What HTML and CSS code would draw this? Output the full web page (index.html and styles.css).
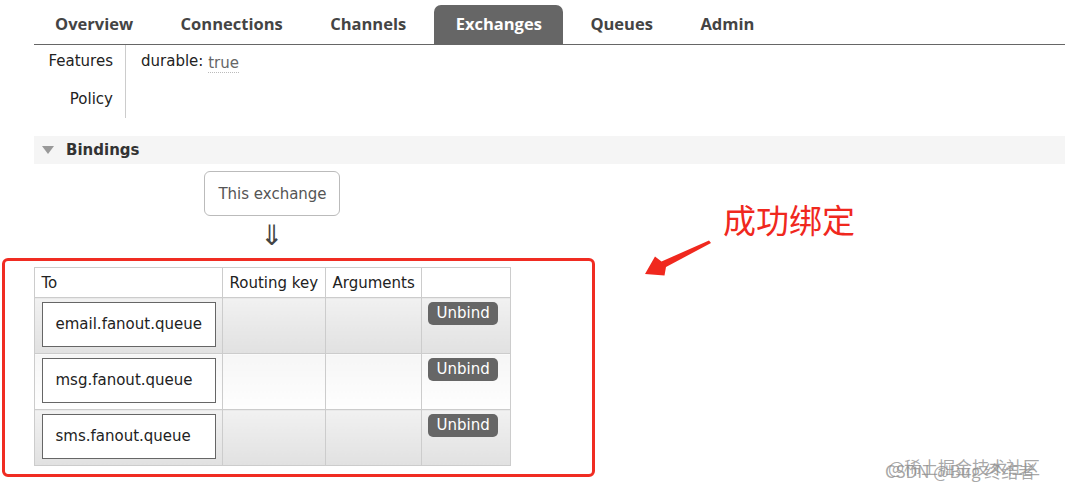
FILE: index.html
```
<!DOCTYPE html>
<html lang="en">
<head>
<meta charset="utf-8">
<title>Exchange bindings</title>
<link rel="stylesheet" href="styles.css">
</head>
<body>
<div class="page">
  <ul class="tabs">
    <li class="tab">Overview</li>
    <li class="tab">Connections</li>
    <li class="tab">Channels</li>
    <li class="tab active">Exchanges</li>
    <li class="tab">Queues</li>
    <li class="tab">Admin</li>
  </ul>

  <table class="facts">
    <tr class="r1"><th>Features</th><td>durable: <abbr class="val">true</abbr></td></tr>
    <tr class="r2"><th>Policy</th><td></td></tr>
  </table>

  <div class="section-head"><span class="tri"></span><span class="section-title">Bindings</span></div>

  <div class="bindings-body">
    <div class="this-exchange">This exchange</div>
    <div class="down-arrow">&#8659;</div>
    <table class="bindings">
      <colgroup>
        <col class="c1"><col class="c2"><col class="c3"><col class="c4">
      </colgroup>
      <thead>
        <tr><th>To</th><th>Routing key</th><th>Arguments</th><th></th></tr>
      </thead>
      <tbody>
        <tr class="alt1">
          <td class="to"><div class="qbox">email.fanout.queue</div></td>
          <td></td><td></td>
          <td class="act"><span class="btn">Unbind</span></td>
        </tr>
        <tr class="alt0">
          <td class="to"><div class="qbox">msg.fanout.queue</div></td>
          <td></td><td></td>
          <td class="act"><span class="btn">Unbind</span></td>
        </tr>
        <tr class="alt1">
          <td class="to"><div class="qbox">sms.fanout.queue</div></td>
          <td></td><td></td>
          <td class="act"><span class="btn">Unbind</span></td>
        </tr>
      </tbody>
    </table>
  </div>

  <div class="red-frame"></div>
  <div class="note">成功绑定</div>
  <svg class="note-arrow" width="80" height="50" viewBox="640 235 80 50">
    <polygon points="709,240.5 711,243 666,267 664.5,275.5 645,274 655,256.5 661.5,261.5" fill="#f0281e"/>
  </svg>
  <div class="wm wm1">@稀土掘金技术社区</div>
  <div class="wm wm2">CSDN @Bug 终结者</div>
</div>
</body>
</html>
```

FILE: styles.css
```
html, body {
  margin: 0;
  padding: 0;
  background: #fff;
}

.page {
  position: relative;
  width: 1065px;
  height: 495px;
  overflow: hidden;
  font-family: "DejaVu Sans", Verdana, sans-serif;
  font-size: 15px;
  color: #222;
}

.tabs {
  list-style: none;
  margin: 0 0 0 34px;
  padding: 5px 0 0 1px;
  display: flex;
  border-bottom: 1px solid #666;
}

.tab {
  font-family: "Open Sans", sans-serif;
  font-weight: 700;
  font-size: 16.5px;
  color: #444;
  height: 39px;
  line-height: 38px;
  padding: 0 20px;
  margin-right: 7.5px;
  border-radius: 7px 7px 0 0;
}

.tab.active {
  background: #666;
  color: #fff;
  padding: 0 21px 0 22px;
}

.facts {
  border-collapse: collapse;
  margin-left: 34px;
}

.facts th {
  width: 79px;
  padding: 7px 12px 0 0;
  text-align: right;
  font-weight: normal;
  border-right: 1px solid #ccc;
  vertical-align: top;
}

.facts td {
  padding: 7px 0 0 15px;
  vertical-align: top;
}

.facts .r1 th,
.facts .r1 td {
  height: 31px;
}

.facts .r2 th,
.facts .r2 td {
  height: 28px;
}

.val {
  color: #666;
  text-decoration: none;
  border-bottom: 1px dotted #bbb;
  position: relative;
  top: 2px;
}

.section-head {
  margin: 18px 0 0 34px;
  height: 28px;
  background: #f5f5f5;
  display: flex;
  align-items: center;
  padding-left: 8px;
}

.tri {
  width: 0;
  height: 0;
  border-left: 6px solid transparent;
  border-right: 6px solid transparent;
  border-top: 8px solid #999;
  margin-right: 12px;
}

.section-title {
  font-weight: 700;
  color: #333;
}

.bindings-body {
  margin: 7px 0 0 34px;
  width: 476px;
  display: flex;
  flex-direction: column;
  align-items: center;
}

.this-exchange {
  height: 43px;
  line-height: 45px;
  padding: 0 12px 0 13px;
  border: 1px solid #bbb;
  border-radius: 6px;
  color: #555;
}

.down-arrow {
  height: 51px;
  line-height: 40px;
  font-size: 28px;
  color: #444;
}

.bindings {
  width: 476px;
  border-collapse: collapse;
  table-layout: fixed;
}

.c1 { width: 188px; }
.c2 { width: 103px; }
.c3 { width: 96px; }
.c4 { width: 89px; }

.bindings th,
.bindings td {
  border: 1px solid #ccc;
  padding: 0;
}

.bindings th {
  height: 29px;
  font-weight: normal;
  text-align: left;
  padding-left: 7px;
  background: #fff;
}

.bindings tr.alt1 td {
  background: linear-gradient(#f1f1f1, #e1e1e1);
}

.bindings tr.alt0 td {
  background: linear-gradient(#f6f6f6, #fefefe);
}

.bindings td {
  height: 46px;
}

.bindings td.to {
  padding: 3px 6px 6px 7px;
}

.qbox {
  height: 43px;
  line-height: 43px;
  border: 1px solid #666;
  background: #fff;
  padding-left: 13px;
  color: #222;
}

.bindings td.act {
  vertical-align: top;
  padding: 4px 0 0 6px;
}

.btn {
  display: inline-block;
  background: #666;
  color: #fff;
  height: 23px;
  line-height: 23px;
  padding: 0 8px 0 9px;
  border-radius: 5px;
}

.red-frame {
  position: absolute;
  left: 2px;
  top: 258px;
  width: 593px;
  height: 219px;
  box-sizing: border-box;
  border: 3px solid #f02c22;
  border-radius: 6px;
}

.note {
  position: absolute;
  left: 723px;
  top: 203px;
  font-family: "Noto Sans CJK SC", sans-serif;
  font-size: 33px;
  line-height: 33px;
  color: #f0281e;
}

.note-arrow {
  position: absolute;
  left: 640px;
  top: 235px;
}

.wm {
  position: absolute;
  font-family: "Noto Sans CJK SC", sans-serif;
  font-size: 17px;
  line-height: 20px;
  color: rgba(140, 140, 140, 0.75);
  white-space: nowrap;
}

.wm1 {
  left: 888px;
  top: 457px;
}

.wm2 {
  left: 885px;
  top: 461px;
}
```
